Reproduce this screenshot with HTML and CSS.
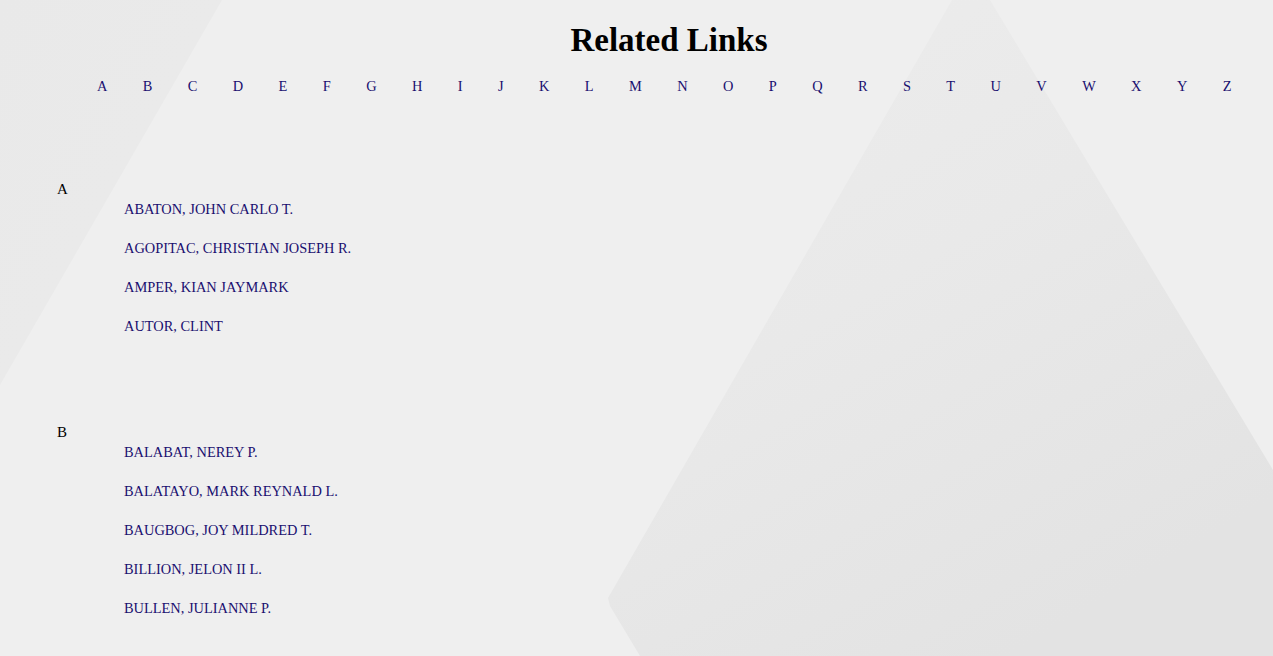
FILE: index.html
```html
<!DOCTYPE html>
<html lang="en">
<head>
<meta charset="utf-8">
<title>Related Links</title>
<link rel="stylesheet" href="styles.css">
</head>
<body>
<svg class="backdrop" width="1273" height="656" viewBox="0 0 1273 656" aria-hidden="true">
  <defs>
    <linearGradient id="pyr" x1="0" y1="0" x2="0.6" y2="1">
      <stop offset="0" stop-color="#ededed"/>
      <stop offset="0.5" stop-color="#e9e9e9"/>
      <stop offset="1" stop-color="#e3e3e3"/>
    </linearGradient>
    <linearGradient id="corner" x1="0" y1="0" x2="1" y2="1">
      <stop offset="0" stop-color="#e9e9e9"/>
      <stop offset="1" stop-color="#ebebeb"/>
    </linearGradient>
  </defs>
  <polygon points="0,0 222,0 0,385" fill="url(#corner)"/>
  <polygon points="952,0 990,0 1273,470 1273,656 640,656 610,606 608,598" fill="url(#pyr)"/>
</svg>
<main class="page">
  <h1 class="title">Related Links</h1>
  <nav class="alphabet">
    <a href="#A">A</a><a href="#B">B</a><a href="#C">C</a><a href="#D">D</a><a href="#E">E</a><a href="#F">F</a><a href="#G">G</a><a href="#H">H</a><a href="#I">I</a><a href="#J">J</a><a href="#K">K</a><a href="#L">L</a><a href="#M">M</a><a href="#N">N</a><a href="#O">O</a><a href="#P">P</a><a href="#Q">Q</a><a href="#R">R</a><a href="#S">S</a><a href="#T">T</a><a href="#U">U</a><a href="#V">V</a><a href="#W">W</a><a href="#X">X</a><a href="#Y">Y</a><a href="#Z">Z</a>
  </nav>
  <section class="group" id="A">
    <div class="group-letter">A</div>
    <ul class="names">
      <li><a href="#">ABATON, JOHN CARLO T.</a></li>
      <li><a href="#">AGOPITAC, CHRISTIAN JOSEPH R.</a></li>
      <li><a href="#">AMPER, KIAN JAYMARK</a></li>
      <li><a href="#">AUTOR, CLINT</a></li>
    </ul>
  </section>
  <section class="group" id="B">
    <div class="group-letter">B</div>
    <ul class="names">
      <li><a href="#">BALABAT, NEREY P.</a></li>
      <li><a href="#">BALATAYO, MARK REYNALD L.</a></li>
      <li><a href="#">BAUGBOG, JOY MILDRED T.</a></li>
      <li><a href="#">BILLION, JELON II L.</a></li>
      <li><a href="#">BULLEN, JULIANNE P.</a></li>
    </ul>
  </section>
</main>
</body>
</html>
```

FILE: styles.css
```css
html, body {
  margin: 0;
  padding: 0;
}
body {
  background: #efefef;
  font-family: "Liberation Serif", "Times New Roman", serif;
  color: #000;
  overflow: hidden;
  height: 656px;
  position: relative;
}
.backdrop {
  position: absolute;
  left: 0;
  top: 0;
  z-index: 0;
}
.page {
  position: relative;
  z-index: 1;
  padding-top: 20px;
}
.title {
  margin: 0;
  padding-left: 65px;
  text-align: center;
  font-size: 33px;
  line-height: 40px;
  font-weight: bold;
  color: #000;
}
.alphabet {
  display: flex;
  gap: 35.4px;
  margin-top: 16px;
  padding-left: 97px;
  font-size: 14.4px;
  line-height: 20px;
}
.alphabet a {
  color: #1a1070;
  text-decoration: none;
}
.group {
  padding-left: 57px;
}
#A {
  margin-top: 84px;
}
#B {
  margin-top: 87px;
}
.group-letter {
  font-size: 15px;
  line-height: 19px;
  color: #000;
}
.names {
  list-style: none;
  margin: 0;
  padding: 0 0 0 67px;
  display: flex;
  flex-direction: column;
  gap: 19px;
  font-size: 14.4px;
  line-height: 20px;
}
.names a {
  color: #1a1070;
  text-decoration: none;
}
```
